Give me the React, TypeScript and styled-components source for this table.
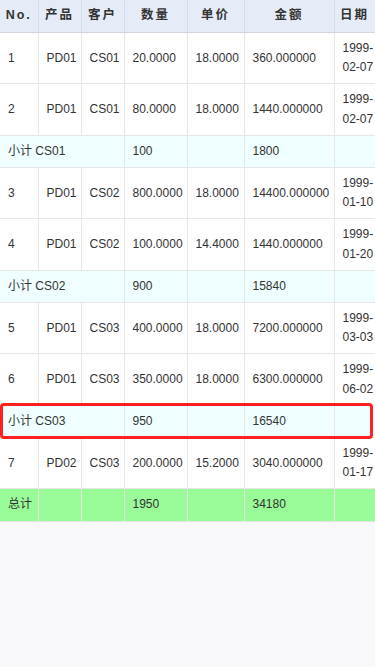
import React from 'react';
import styled, { createGlobalStyle } from 'styled-components';

interface DataRow {
  kind: 'data';
  no: number;
  product: string;
  customer: string;
  qty: string;
  price: string;
  amount: string;
  date: string;
}

interface SumRow {
  kind: 'sub' | 'total';
  label: string;
  qty: string;
  amount: string;
}

type Row = DataRow | SumRow;

const rows: Row[] = [
  { kind: 'data', no: 1, product: 'PD01', customer: 'CS01', qty: '20.0000', price: '18.0000', amount: '360.000000', date: '1999-02-07' },
  { kind: 'data', no: 2, product: 'PD01', customer: 'CS01', qty: '80.0000', price: '18.0000', amount: '1440.000000', date: '1999-02-07' },
  { kind: 'sub', label: '小计 CS01', qty: '100', amount: '1800' },
  { kind: 'data', no: 3, product: 'PD01', customer: 'CS02', qty: '800.0000', price: '18.0000', amount: '14400.000000', date: '1999-01-10' },
  { kind: 'data', no: 4, product: 'PD01', customer: 'CS02', qty: '100.0000', price: '14.4000', amount: '1440.000000', date: '1999-01-20' },
  { kind: 'sub', label: '小计 CS02', qty: '900', amount: '15840' },
  { kind: 'data', no: 5, product: 'PD01', customer: 'CS03', qty: '400.0000', price: '18.0000', amount: '7200.000000', date: '1999-03-03' },
  { kind: 'data', no: 6, product: 'PD01', customer: 'CS03', qty: '350.0000', price: '18.0000', amount: '6300.000000', date: '1999-06-02' },
  { kind: 'sub', label: '小计 CS03', qty: '950', amount: '16540' },
  { kind: 'data', no: 7, product: 'PD02', customer: 'CS03', qty: '200.0000', price: '15.2000', amount: '3040.000000', date: '1999-01-17' },
  { kind: 'total', label: '总计', qty: '1950', amount: '34180' },
];

const columns = [
  { title: 'No.', width: 38 },
  { title: '产品', width: 43 },
  { title: '客户', width: 43 },
  { title: '数量', width: 63 },
  { title: '单价', width: 57 },
  { title: '金额', width: 90 },
  { title: '日期', width: 41 },
];

const App = () => {
  return (
    <>
      <GlobalStyle />
      <TableWrapper>
        <ReportTable>
          <colgroup>
            {columns.map((c) => (
              <col key={c.title} style={{ width: c.width }} />
            ))}
          </colgroup>
          <thead>
            <tr>
              {columns.map((c) => (
                <HeadCell key={c.title}>{c.title}</HeadCell>
              ))}
            </tr>
          </thead>
          <tbody>
            {rows.map((r, i) =>
              r.kind === 'data' ? (
                <tr key={i}>
                  <Cell>{r.no}</Cell>
                  <Cell>{r.product}</Cell>
                  <Cell>{r.customer}</Cell>
                  <Cell>{r.qty}</Cell>
                  <Cell>{r.price}</Cell>
                  <Cell>{r.amount}</Cell>
                  <Cell>{r.date.slice(0, 5)}<br />{r.date.slice(5)}</Cell>
                </tr>
              ) : r.kind === 'sub' ? (
                <SumTr key={i} $total={false}>
                  <Cell colSpan={3}>{r.label}</Cell>
                  <Cell>{r.qty}</Cell>
                  <Cell />
                  <Cell>{r.amount}</Cell>
                  <Cell />
                </SumTr>
              ) : (
                <SumTr key={i} $total>
                  <Cell>{r.label}</Cell>
                  <Cell />
                  <Cell />
                  <Cell>{r.qty}</Cell>
                  <Cell />
                  <Cell>{r.amount}</Cell>
                  <Cell />
                </SumTr>
              )
            )}
          </tbody>
        </ReportTable>
        <Highlight />
      </TableWrapper>
    </>
  );
};

const GlobalStyle = createGlobalStyle`
  html, body {
    margin: 0;
    padding: 0;
    background: #f8f8fd;
    height: 100%;
  }
  body {
    font-family: "Liberation Sans", Arial, "Noto Sans CJK SC", sans-serif;
    color: #333;
  }
`;

const TableWrapper = styled.div`
  position: relative;
  width: 375px;
  overflow: hidden;
`;

const ReportTable = styled.table`
  width: 375px;
  table-layout: fixed;
  border-collapse: collapse;
  background: #fff;
  font-size: 12px;
  line-height: 19.2px;
`;

const HeadCell = styled.th`
  height: 32px;
  padding: 0 4px;
  background: #e5ecf7;
  border-right: 1px solid #d9dee6;
  border-bottom: 1px solid #d3d7dd;
  font-size: 12.5px;
  font-weight: bold;
  letter-spacing: 2px;
  text-align: center;
  white-space: nowrap;
  color: #333;
`;

const Cell = styled.td`
  padding: 6px 0 6px 8px;
  border-right: 1px solid #e6e6e6;
  border-bottom: 1px solid #e6e6e6;
  text-align: left;
  vertical-align: middle;
  white-space: nowrap;
`;

const SumTr = styled.tr<{ $total: boolean }>`
  background: ${(p) => (p.$total ? '#98fb98' : '#efffff')};
`;

/* red marker drawn over the CS03 subtotal row */
const Highlight = styled.div`
  position: absolute;
  left: 0;
  top: 403px;
  width: 373px;
  height: 36px;
  box-sizing: border-box;
  border: 3px solid #ff2020;
  border-radius: 4px;
  pointer-events: none;
`;

export default App;
